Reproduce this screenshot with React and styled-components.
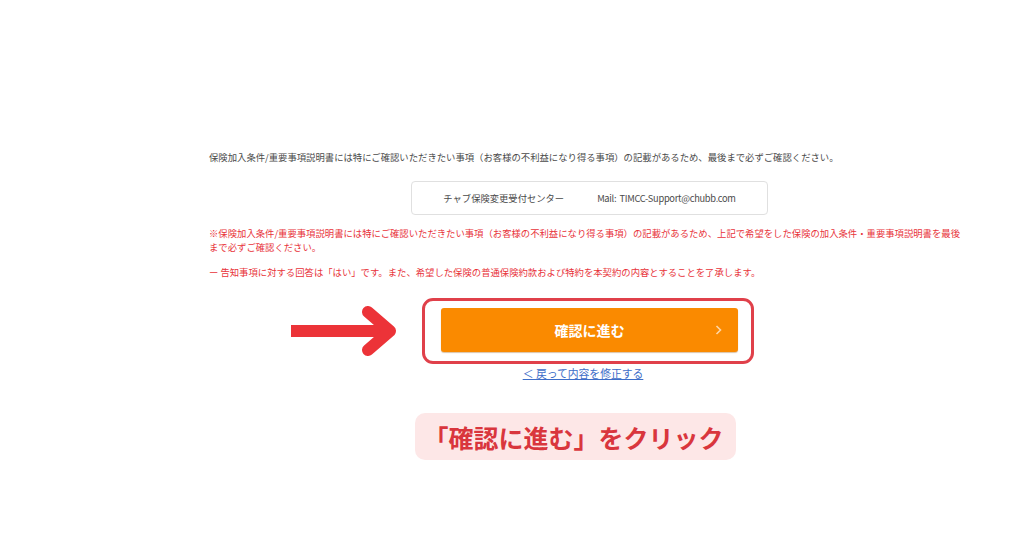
import React from 'react'
import styled, { createGlobalStyle } from 'styled-components';

const GlobalStyle = createGlobalStyle`
  html, body {
    margin: 0;
    padding: 0;
    background: #ffffff;
  }
  body {
    font-family: "Noto Sans CJK JP", "Noto Sans", sans-serif;
  }
`

const Page = styled.div`
  width: 1024px;
  height: 538px;
  background: #fff;
  overflow: hidden;
`

const Column = styled.div`
  width: 759px;
  margin-left: 209px;
  padding-top: 150px;
  display: flex;
  flex-direction: column;
`

const Note = styled.p`
  margin: ${p => p.$top || 0}px 0 0;
  font-size: 9.35px;
  line-height: 14px;
  color: ${p => p.$red ? '#e8333a' : '#4a4a4a'};
  letter-spacing: 0;
`

const ContactBox = styled.div`
  align-self: center;
  width: 357px;
  height: 34px;
  margin: 17px 0 0 2px;
  box-sizing: border-box;
  border: 1px solid #e0e0e0;
  border-radius: 4px;
  display: flex;
  align-items: center;
  justify-content: center;
  font-size: 9.3px;
  color: #4a4a4a;
`

const Mail = styled.span`
  margin-left: 33px;
  letter-spacing: -0.3px;
  word-spacing: 1.5px;
`

const ActionRow = styled.div`
  margin: 19px 0 0 -209px;
  width: 1176px;
  display: grid;
  grid-template-columns: 422px 332px 1fr;
  align-items: center;
`

const ArrowWrap = styled.div`
  justify-self: end;
  padding-right: 25px;
  display: flex;
`

const Highlight = styled.div`
  box-sizing: border-box;
  width: 332px;
  height: 66px;
  border: 3px solid #e0404a;
  border-radius: 11px;
  padding: 7px 13px 9px 16px;
  display: flex;
`

const ConfirmButton = styled.button`
  flex: 1;
  position: relative;
  border: none;
  border-radius: 3px;
  background: #fa8a00;
  color: #fff;
  font-family: inherit;
  font-size: 14px;
  font-weight: 700;
  box-shadow: 0 1px 1px rgba(150, 80, 0, 0.35);
  display: flex;
  align-items: center;
  justify-content: center;
  cursor: pointer;
`

const Chevron = styled.svg`
  position: absolute;
  right: 16px;
  top: 50%;
  margin-top: -5px;
`

const BackLink = styled.a`
  align-self: center;
  margin: 2px 0 0 -11px;
  font-size: 10.8px;
  line-height: 14px;
  color: #3d6dc8;
  text-decoration: underline;
  text-underline-offset: 1px;
`

const Label = styled.div`
  margin: 33px 0 0 206px;
  width: 321px;
  height: 47px;
  box-sizing: border-box;
  border-radius: 10px;
  background: #fde7e7;
  display: flex;
  align-items: center;
  justify-content: center;
  padding-right: 4px;
  color: #d9363d;
  font-size: 25px;
  font-weight: 700;
  letter-spacing: 0;
`

const App = () => {
    return (
        <Page>
            <GlobalStyle />
            <Column>
                <Note>
                    保険加入条件/重要事項説明書には特にご確認いただきたい事項（お客様の不利益になり得る事項）の記載があるため、最後まで必ずご確認ください。
                </Note>
                <ContactBox>
                    チャブ保険変更受付センター<Mail>Mail: TIMCC-Support@chubb.com</Mail>
                </ContactBox>
                <Note $red $top={11}>
                    ※保険加入条件/重要事項説明書には特にご確認いただきたい事項（お客様の不利益になり得る事項）の記載があるため、上記で希望をした保険の加入条件・重要事項説明書を最後まで必ずご確認ください。
                </Note>
                <Note $red $top={11}>
                    ー 告知事項に対する回答は「はい」です。また、希望した保険の普通保険約款および特約を本契約の内容とすることを了承します。
                </Note>
                <ActionRow>
                    <ArrowWrap>
                        <svg width="108" height="50" viewBox="0 0 108 50">
                            <path d="M2 25 H98" stroke="#ec3338" strokeWidth="12" fill="none" />
                            <path d="M79 6 L101 25 L79 44" stroke="#ec3338" strokeWidth="12" fill="none" strokeLinecap="round" strokeLinejoin="round" />
                        </svg>
                    </ArrowWrap>
                    <Highlight>
                        <ConfirmButton>
                            確認に進む
                            <Chevron width="7" height="10" viewBox="0 0 7 10">
                                <polyline points="1.5,1 5.5,5 1.5,9" stroke="rgba(255,255,255,0.65)" strokeWidth="1.6" fill="none" />
                            </Chevron>
                        </ConfirmButton>
                    </Highlight>
                </ActionRow>
                <BackLink href="#">＜ 戻って内容を修正する</BackLink>
                <Label>「確認に進む」をクリック</Label>
            </Column>
        </Page>
    )
}

export default App;
